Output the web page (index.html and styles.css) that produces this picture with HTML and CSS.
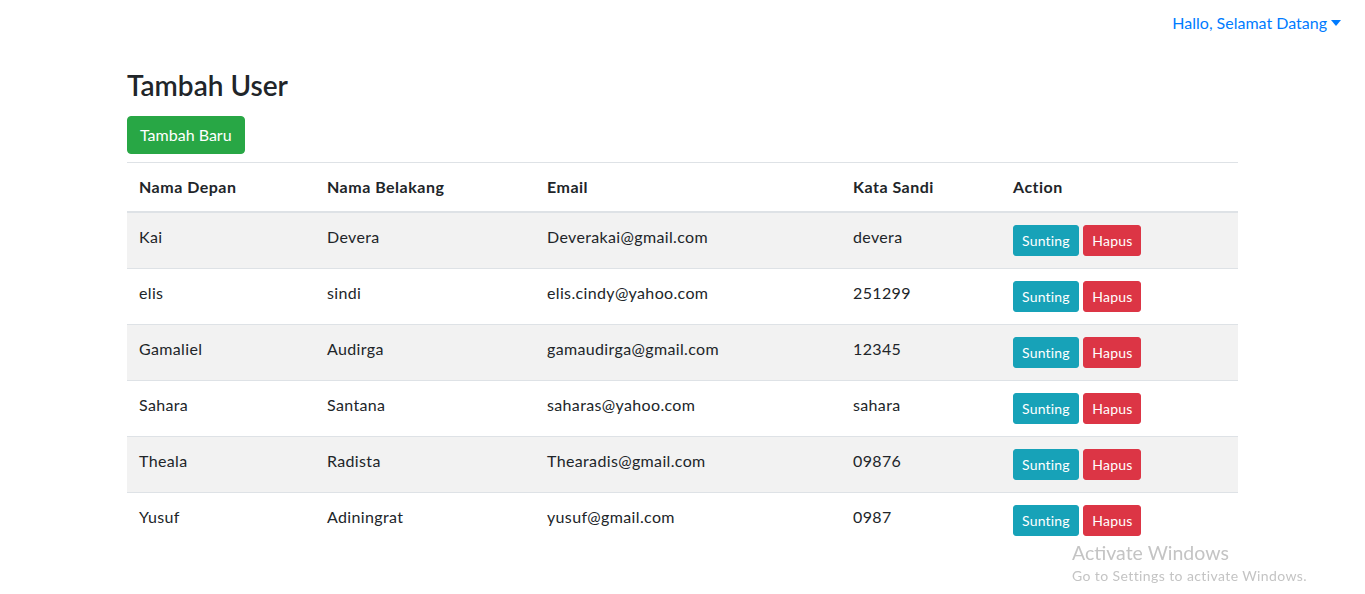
FILE: index.html
```html
<!DOCTYPE html>
<html lang="id">
<head>
<meta charset="utf-8">
<title>Tambah User</title>
<link rel="stylesheet" href="styles.css">
</head>
<body>
<nav class="navbar">
  <a class="nav-link dropdown-toggle" href="#">Hallo, Selamat Datang</a>
</nav>
<main class="container">
  <h3 class="title">Tambah User</h3>
  <a class="btn btn-success" href="#">Tambah Baru</a>
  <table class="table">
    <thead>
      <tr>
        <th class="c1">Nama Depan</th>
        <th class="c2">Nama Belakang</th>
        <th class="c3">Email</th>
        <th class="c4">Kata Sandi</th>
        <th class="c5">Action</th>
      </tr>
    </thead>
    <tbody>
      <tr><td>Kai</td><td>Devera</td><td>Deverakai@gmail.com</td><td>devera</td><td><a class="btn btn-sm btn-info" href="#">Sunting</a> <a class="btn btn-sm btn-danger" href="#">Hapus</a></td></tr>
      <tr><td>elis</td><td>sindi</td><td>elis.cindy@yahoo.com</td><td>251299</td><td><a class="btn btn-sm btn-info" href="#">Sunting</a> <a class="btn btn-sm btn-danger" href="#">Hapus</a></td></tr>
      <tr><td>Gamaliel</td><td>Audirga</td><td>gamaudirga@gmail.com</td><td>12345</td><td><a class="btn btn-sm btn-info" href="#">Sunting</a> <a class="btn btn-sm btn-danger" href="#">Hapus</a></td></tr>
      <tr><td>Sahara</td><td>Santana</td><td>saharas@yahoo.com</td><td>sahara</td><td><a class="btn btn-sm btn-info" href="#">Sunting</a> <a class="btn btn-sm btn-danger" href="#">Hapus</a></td></tr>
      <tr><td>Theala</td><td>Radista</td><td>Thearadis@gmail.com</td><td>09876</td><td><a class="btn btn-sm btn-info" href="#">Sunting</a> <a class="btn btn-sm btn-danger" href="#">Hapus</a></td></tr>
      <tr><td>Yusuf</td><td>Adiningrat</td><td>yusuf@gmail.com</td><td>0987</td><td><a class="btn btn-sm btn-info" href="#">Sunting</a> <a class="btn btn-sm btn-danger" href="#">Hapus</a></td></tr>
    </tbody>
  </table>
</main>
<div class="watermark">
  <div class="wm-title">Activate Windows</div>
  <div class="wm-sub">Go to Settings to activate Windows.</div>
</div>
</body>
</html>
```

FILE: styles.css
```css
* { box-sizing: border-box; }
body {
  margin: 0;
  font-family: "Lato", "Open Sans", "DejaVu Sans", sans-serif;
  font-size: 16px;
  line-height: 1.5;
  color: #212529;
  background: #fff;
}
a { text-decoration: none; }

.navbar {
  display: flex;
  justify-content: flex-end;
  padding: 11px 16px 0 16px;
  height: 46px;
}
.nav-link {
  color: #007bff;
  padding: 0 8px;
  line-height: 24px;
}
.dropdown-toggle::after {
  content: "";
  display: inline-block;
  margin-left: 4px;
  vertical-align: 3px;
  border-top: 6px solid #007bff;
  border-left: 5px solid transparent;
  border-right: 5px solid transparent;
}

.container {
  width: 1111px;
  margin: 0 auto;
}
.title {
  margin: 22px 0 14px;
  font-size: 28px;
  font-weight: 600;
  line-height: 34px;
}

.btn {
  display: inline-block;
  padding: 6px 12px;
  font-size: 16px;
  line-height: 24px;
  border: 1px solid transparent;
  border-radius: 4px;
  color: #fff;
  vertical-align: middle;
}
.btn-sm {
  padding: 4px 8px;
  font-size: 14px;
  line-height: 21px;
  border-radius: 3px;
  letter-spacing: 0.2px;
}
.btn-success { background: #28a745; border-color: #28a745; }
.btn-info { background: #17a2b8; border-color: #17a2b8; }
.btn-danger { background: #dc3545; border-color: #dc3545; }

.table {
  width: 100%;
  margin-top: 8px;
  border-collapse: collapse;
}
.table th, .table td {
  padding: 12px;
  text-align: left;
  vertical-align: top;
  border-top: 1px solid #dee2e6;
  letter-spacing: 0.35px;
}
.table th {
  font-weight: 700;
  border-bottom: 2px solid #dee2e6;
  letter-spacing: 0.5px;
}
.table tbody tr:nth-child(odd) { background: #f2f2f2; }
.c1 { width: 188px; }
.c2 { width: 220px; }
.c3 { width: 306px; }
.c4 { width: 160px; }
.c5 { width: 237px; }

.watermark {
  position: fixed;
  left: 1072px;
  top: 541px;
  color: #c4c4c4;
  line-height: 1.2;
}
.wm-title { font-size: 19.5px; }
.wm-sub { font-size: 14px; margin-top: 4px; letter-spacing: 0.4px; }
```
